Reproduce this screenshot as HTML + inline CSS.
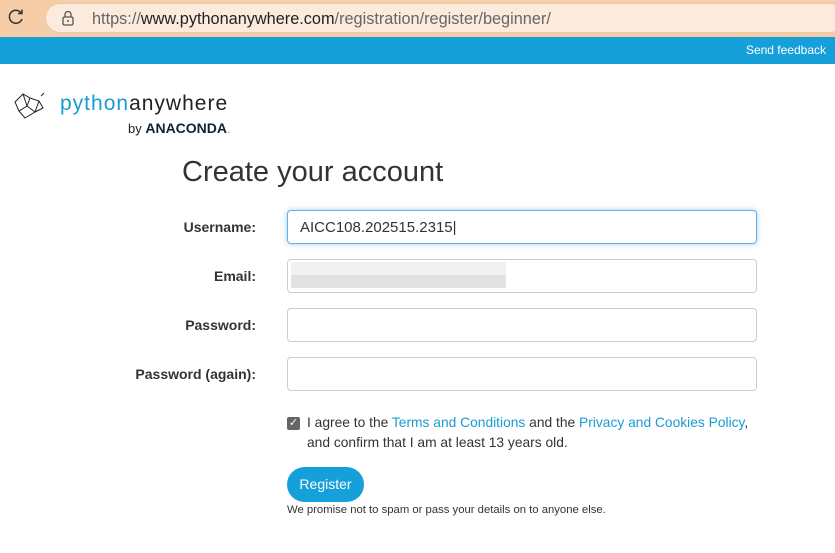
<!DOCTYPE html>
<html><head><meta charset="utf-8"><style>
*{box-sizing:border-box;margin:0;padding:0}
body{width:835px;height:553px;overflow:hidden;background:#fff;font-family:"Liberation Sans",sans-serif;position:relative}
.top{position:absolute;left:0;top:0;width:835px;height:37px;background:#f6cda6}
.url{position:absolute;left:45px;top:3px;width:800px;height:30px;border-radius:15px;background:#fcebdc;border:1px solid #e8c9ad}
.url span{position:absolute;left:46px;top:6px;font-size:16.3px;color:#666}
.url b{font-weight:normal;color:#222}
.blue{position:absolute;left:0;top:37px;width:835px;height:27px;background:#16a0d9}
.fb{position:absolute;right:9px;top:43px;color:#fff;font-size:12px}
.logo{position:absolute;left:60px;top:92px;font-size:21px;letter-spacing:1px;color:#222}
.by{position:absolute;left:128px;top:120px;font-size:13px;color:#222}
.by b{font-size:14px;color:#123}
h1{position:absolute;left:182px;top:156px;font-size:29px;font-weight:normal;color:#333}
.lab{position:absolute;right:579px;font-size:14px;font-weight:bold;color:#333}
.in{position:absolute;left:287px;width:470px;height:34px;border:1px solid #ccc;border-radius:4px;background:#fff}
.in.f{border-color:#66afe9;box-shadow:0 0 6px rgba(102,175,233,.6)}
.t{position:absolute;left:307px;font-size:13.8px;color:#333}
a{color:#1a9bd5;text-decoration:none}
.btn{position:absolute;left:287px;top:467px;width:77px;height:35px;border-radius:18px;background:#16a0d9;color:#fff;font-size:14px;text-align:center;line-height:35px}
</style></head><body>
<div class="top"></div>
<svg style="position:absolute;left:6px;top:7px" width="20" height="20" viewBox="0 0 20 20"><path d="M15.5 6.5A6.5 6.5 0 1 0 16 12" fill="none" stroke="#333" stroke-width="1.5"/><path d="M12 6.5h4v-4" fill="none" stroke="#333" stroke-width="1.5"/></svg>
<div class="url"><svg style="position:absolute;left:15px;top:6px" width="14" height="16" viewBox="0 0 14 16"><rect x="2" y="7" width="10" height="8" rx="1.5" fill="none" stroke="#555" stroke-width="1.3"/><path d="M4 7V4.5a3 3 0 0 1 6 0V7" fill="none" stroke="#555" stroke-width="1.3"/><circle cx="7" cy="11" r="1" fill="#555"/></svg><span>https://<b>www.pythonanywhere.com</b>/registration/register/beginner/</span></div>
<div class="blue"></div><div class="fb">Send feedback</div>
<svg style="position:absolute;left:13px;top:92px" width="36" height="30" viewBox="0 0 36 30"><path d="M2 10L10 2L17 6L14 14L6 19Z M10 2L14 14 M17 6L26 9L22 20L14 14 M6 19L12 26L22 20 M22 20L30 16L26 9 M28 4l3-3" fill="none" stroke="#222" stroke-width="1"/></svg>
<div class="logo"><span style="color:#1a9bd5">python</span>anywhere</div>
<div class="by">by <b>ANACONDA</b><span style="color:#999">.</span></div>
<h1>Create your account</h1>
<div class="lab" style="top:219px">Username:</div>
<div class="in f" style="top:210px"><span style="position:absolute;left:12px;top:8px;font-size:15px;color:#333">AICC108.202515.2315|</span></div>
<div class="lab" style="top:268px">Email:</div>
<div class="in" style="top:259px"><div style="position:absolute;left:3px;top:2px;width:215px;height:13px;background:#f1f1f1"></div><div style="position:absolute;left:3px;top:15px;width:215px;height:13px;background:#e2e2e2"></div></div>
<div class="lab" style="top:317px">Password:</div>
<div class="in" style="top:308px"></div>
<div class="lab" style="top:366px">Password (again):</div>
<div class="in" style="top:357px"></div>
<div style="position:absolute;left:287px;top:417px;width:13px;height:13px;background:#666;border-radius:2px;color:#fff;font-size:11px;line-height:13px;text-align:center">✓</div>
<div class="t" style="top:415px">I agree to the <a>Terms and Conditions</a> and the <a>Privacy and Cookies Policy</a>,</div>
<div class="t" style="top:435px">and confirm that I am at least 13 years old.</div>
<div class="btn">Register</div>
<div style="position:absolute;left:287px;top:504px;font-size:11.3px;color:#333">We promise not to spam or pass your details on to anyone else.</div>
</body></html>
